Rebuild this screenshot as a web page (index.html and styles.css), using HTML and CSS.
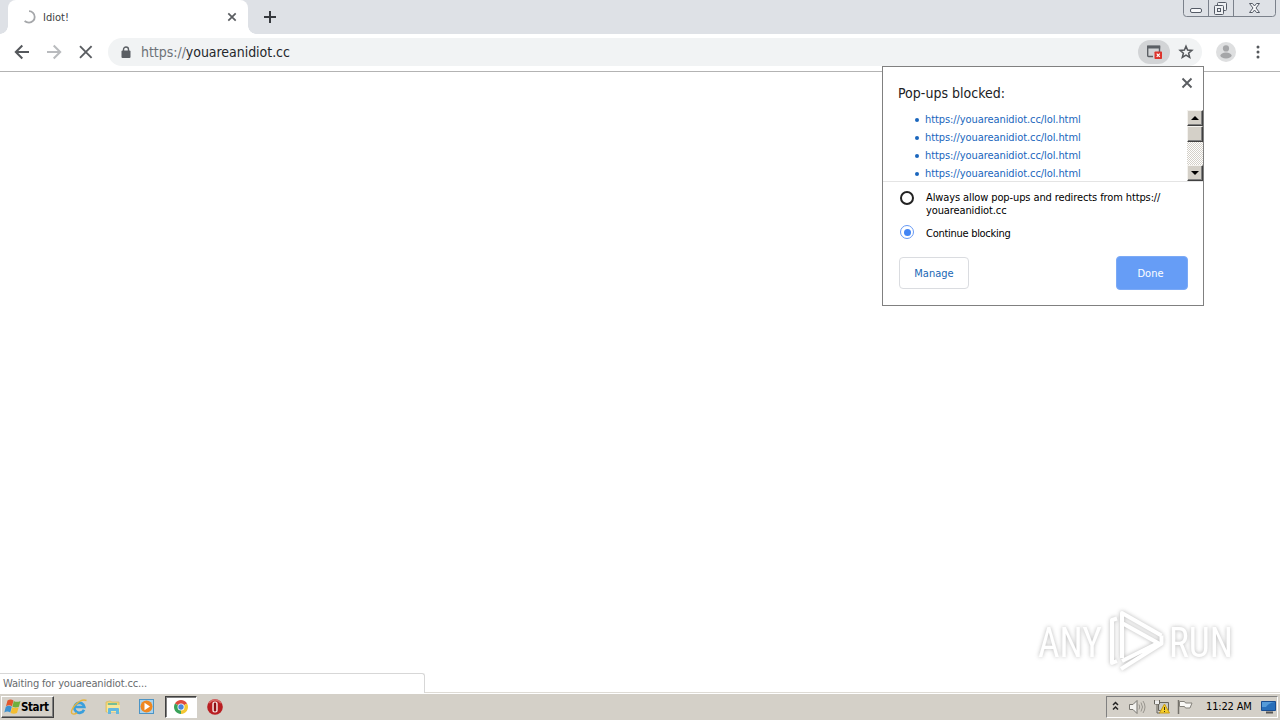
FILE: index.html
```
<!DOCTYPE html>
<html lang="en">
<head>
<meta charset="utf-8">
<title>Idiot!</title>
<link rel="stylesheet" href="styles.css">
</head>
<body>
<div class="screen">
  <header class="tabstrip">
    <div class="tab">
      <svg class="spinner" width="14" height="14" viewBox="0 0 14 14"><path d="M7 1.200A5.700 5.700 0 0 1 7 12.600Q4.500 12.600 2.600 11" fill="none" stroke="#a5a7aa" stroke-width="1.800"/></svg>
      <span class="tab-title">Idiot!</span>
      <svg class="tab-close" width="10" height="10" viewBox="0 0 10 10"><path d="M1.300 1.300l7.400 7.400M8.700 1.300L1.300 8.700" stroke="#5a5d61" stroke-width="1.700"/></svg>
    </div>
    <svg class="new-tab" width="14" height="14" viewBox="0 0 14 14"><path d="M7 1v12M1 7h12" stroke="#36393e" stroke-width="2"/></svg>
    <svg class="winctl" width="94" height="18" viewBox="0 0 94 18" fill="none" stroke="#7b818b">
      <path d="M.5 0v13.500q0 3 3 3h86q3 0 3-3V0M25.500 0v16M50.500 0v16"/>
      <rect x="7.500" y="8.500" width="11" height="4" rx="1.500" fill="#f7f8fa" stroke="#555b66"/>
      <g stroke="#555b66" fill="#eef0f3"><rect x="34.500" y="2.500" width="9" height="8" rx="1"/><rect x="31.500" y="5.500" width="9" height="9" rx="1"/><rect x="34.500" y="8.500" width="3" height="3"/></g>
      <path d="M66.500 3.500h3l2 2.500 2-2.500h3l-3.500 4.500 3.500 4.500h-3l-2-2.500-2 2.500h-3l3.500-4.500z" fill="#f7f8fa" stroke="#555b66"/>
    </svg>
  </header>

  <nav class="toolbar">
    <svg class="nav-icons" width="94" height="20" viewBox="0 0 94 20" fill="none" stroke-width="2">
      <path d="M15 10H2M8.300 3.500L1.800 10l6.500 6.500" stroke="#55585c"/>
      <path d="M33 10h13M39.700 3.500l6.500 6.500-6.500 6.500" stroke="#b9bbbe"/>
      <path d="M66 4.200L77.600 15.800M77.600 4.200L66 15.800" stroke="#5b5e62" stroke-width="1.900"/>
    </svg>
    <div class="omnibox">
      <svg class="lock" width="10" height="13" viewBox="0 0 10 13"><path d="M2.500 5V3.500a2.500 2.500 0 0 1 5 0V5" fill="none" stroke="#5b5f64" stroke-width="1.400"/><rect x=".5" y="4.500" width="9" height="7.500" rx="1" fill="#5b5f64"/></svg>
      <span class="url"><span class="scheme">https://</span>youareanidiot.cc</span>
      <span class="blocked">
        <svg width="18" height="16" viewBox="0 0 18 16"><path d="M2.700 2.500h11.800V8M8 12.500H3.700q-1 0-1-1V2" fill="none" stroke="#5b5f64" stroke-width="1.400"/><path d="M2 1.500h13.200v3H2z" fill="#5b5f64"/><rect x="9.500" y="7.500" width="7.500" height="7.500" rx=".7" fill="#dd342c"/><path d="M11.700 9.700l3.100 3.100M14.800 9.700l-3.100 3.100" stroke="#fff" stroke-width="1.200"/></svg>
      </span>
      <svg class="star" width="16" height="16" viewBox="0 0 16 16"><path d="M8 2.200l1.600 3.900 4.300.3-3.300 2.800 1.100 4.200L8 11.100l-3.700 2.300 1.100-4.200-3.300-2.800 4.300-.3z" fill="none" stroke="#54575b" stroke-width="1.500"/></svg>
    </div>
    <svg class="avatar" width="20" height="20" viewBox="0 0 20 20"><circle cx="10" cy="10" r="10" fill="#dedfe0"/><circle cx="10" cy="6.400" r="3.100" fill="#a5a6a8"/><ellipse cx="10" cy="13.500" rx="5.600" ry="3" fill="#a5a6a8"/></svg>
    <svg class="kebab" width="4" height="14" viewBox="0 0 4 14" fill="#55585c"><circle cx="2" cy="2" r="1.500"/><circle cx="2" cy="7" r="1.500"/><circle cx="2" cy="12" r="1.500"/></svg>
  </nav>

  <main class="page"></main>

  <footer class="taskbar">
    <div class="start">
      <svg width="17" height="16" viewBox="0 0 17 16"><path d="M3.500 1.500q3-2 6 0L8 7.200q-3-1.700-6 0z" fill="#e2562b"/><path d="M9.800 2q3 1.700 6.700 0L14.900 7.700q-3.200 1.600-6.500 0z" fill="#6faf3d"/><path d="M1.800 7.700q3-1.700 6 0L6.300 13.500q-3-1.800-6 0z" fill="#3c91d0"/><path d="M8.200 8.300q3.300 1.600 6.500 0L13 14q-3.200 1.600-6.500 0z" fill="#f3bd31"/></svg>
      <span>Start</span>
    </div>
    <div class="launchers">
      <svg width="18" height="18" viewBox="0 0 18 18"><path d="M14 11.700a5 5 0 1 1 .3-2.700H5" fill="none" stroke="#3a9fdc" stroke-width="2.700"/><path d="M2 15.500C-1 12 10-.5 16.500 2.500M2 15.500q2 1.500 5-.6" fill="none" stroke="#e7b43b" stroke-width="1.400"/></svg>
      <svg width="18" height="18" viewBox="0 0 18 18"><path d="M2 4l4-1 2 1h7v10H2z" fill="#f0d676" stroke="#d9b95b" stroke-width=".7"/><path d="M4 5h9v3H4z" fill="#75bd95"/><path d="M3 7h13v7H3z" fill="#f7e69a"/><path d="M4 16v-5q0-1 1-1h9q1 0 1 1v5h-3v-3H7v3z" fill="#63b8df"/></svg>
      <svg width="18" height="18" viewBox="0 0 18 18"><rect x="1.500" y="1.500" width="14" height="14" fill="#a9d3ed" stroke="#4c94c5"/><circle cx="8.500" cy="8.500" r="6" fill="#ef8720"/><path d="M6.500 4.700l5.500 3.800-5.500 3.800z" fill="#fff"/></svg>
      <div class="active-app"><svg width="14" height="14" viewBox="0 0 14 14"><path d="M7 7L.94 3.500A7 7 0 0 1 13.060 3.500z" fill="#de4b3d"/><path d="M7 7L.94 3.500A7 7 0 0 0 7 14z" fill="#3aa259"/><path d="M7 7l6.060-3.500A7 7 0 0 1 7 14z" fill="#f4c732"/><circle cx="7" cy="7" r="3.500" fill="#fff"/><circle cx="7" cy="7" r="2.700" fill="#4a86dc"/></svg></div>
      <svg width="18" height="18" viewBox="0 0 18 18"><circle cx="9" cy="9" r="7.800" fill="#b91e22"/><path d="M3 5a7.500 7.500 0 0 1 12 0" fill="none" stroke="#d86967" stroke-width="1.500"/><rect x="6.300" y="3.500" width="5.400" height="11" rx="2.500" fill="#f8e7e5"/><rect x="7.800" y="4.500" width="2.400" height="9" rx="1.200" fill="#8e0e14"/></svg>
    </div>
    <div class="tray">
      <svg width="90" height="20" viewBox="0 0 90 20" fill="none">
        <path d="M6 8l2.500-2.500L11 8M6 12.500L8.500 10l2.500 2.500" stroke="#222" stroke-width="1.500"/>
        <path d="M22.500 7.500H26l4-4v13l-4-4h-3.500z" fill="#f3f2ef" stroke="#77756f"/><path d="M32 7.500q1.500 2.500 0 5M34 5.500q3 4.500 0 9M36 4q4 6 0 12" stroke="#98958e"/>
        <path d="M51.500 5.500h10v8h-10z" fill="#c8c9c5" stroke="#66645d"/><path d="M47.500 3v4h5V3M50 7v9h3" stroke="#66645d"/><path d="M48 4h4v3h-4z" fill="#eee"/><path d="M57.500 7l5 9h-10z" fill="#f6cf29" stroke="#c89b17"/><path d="M57.500 10v3M57.500 14v1" stroke="#3a3018"/>
        <path d="M71.500 3v14" stroke="#74716b" stroke-width="1.500"/><path d="M72.500 4.500h5l1 1.500h6.500l-2 5h-4.500l-1-1.500h-5z" fill="#faf9f6" stroke="#85827b"/>
      </svg>
      <span class="clock">11:22 AM</span>
      <svg class="desktop" width="17" height="16" viewBox="0 0 17 16"><path d="M1.500 2.500h14v9h-14z" fill="#286fba" stroke="#194d91"/><path d="M2 3h13q-7 1-9 5H2z" fill="#559bd9"/><path d="M6 13.500h7" stroke="#555" stroke-width="2"/></svg>
    </div>
  </footer>

  <section class="popup">
    <div class="popup-head">
      <h1>Pop-ups blocked:</h1>
      <svg class="popup-close" width="12" height="12" viewBox="0 0 12 12"><path d="M1.500 1.500l9 9M10.500 1.500l-9 9" stroke="#5a5d61" stroke-width="1.900"/></svg>
    </div>
    <div class="list-area">
      <ul>
        <li>https://youareanidiot.cc/lol.html</li>
        <li>https://youareanidiot.cc/lol.html</li>
        <li>https://youareanidiot.cc/lol.html</li>
        <li>https://youareanidiot.cc/lol.html</li>
      </ul>
      <div class="scrollbar">
        <div class="sb-btn"><svg width="8" height="4" viewBox="0 0 8 4"><path d="M0 4l4-4 4 4z"/></svg></div>
        <div class="sb-btn"></div>
        <div class="sb-track"></div>
        <div class="sb-btn"><svg width="8" height="4" viewBox="0 0 8 4"><path d="M0 0l4 4 4-4z"/></svg></div>
      </div>
    </div>
    <div class="options">
      <div class="option"><span class="radio"></span><span class="option-text">Always allow pop-ups and redirects from https://<br>youareanidiot.cc</span></div>
      <div class="option"><span class="radio checked"></span><span class="option-text short">Continue blocking</span></div>
    </div>
    <div class="actions">
      <button class="btn manage">Manage</button>
      <button class="btn done">Done</button>
    </div>
  </section>

  <div class="status">Waiting for youareanidiot.cc...</div>

  <svg class="watermark" width="210" height="76" viewBox="0 0 210 76">
    <g class="wm-text"><text x="8" y="54" textLength="64" lengthAdjust="spacingAndGlyphs">ANY</text><text x="139" y="54" textLength="64" lengthAdjust="spacingAndGlyphs">RUN</text></g>
    <g fill="none" stroke="#fff" stroke-width="4" stroke-linejoin="round">
      <path d="M87 15.500l-5 1.500v43l5-2M92 55V10l39.500 22.500M92 20l36 20-36 18M131.500 32.500v8L91 66"/>
    </g>
  </svg>
</div>
</body>
</html>
```
FILE: styles.css
```
* { box-sizing: border-box; }
body { margin: 0; background: #fff; font-family: "DejaVu Sans Condensed", "DejaVu Sans", sans-serif; font-stretch: condensed; font-size: 11px; color: #111; }
svg { display: block; flex: none; }
.screen { position: relative; display: flex; flex-direction: column; width: 1280px; height: 720px; overflow: hidden; }

.tabstrip { display: flex; height: 34px; padding-left: 8px; background: #dee1e6; }
.tab { position: relative; display: flex; align-items: center; width: 240px; padding: 0 11px 0 14px; background: #fff; border-radius: 8px 8px 0 0; }
.tab::before, .tab::after { content: ""; position: absolute; bottom: 0; width: 8px; height: 8px; }
.tab::before { left: -8px; background: radial-gradient(circle at 0 0, #dee1e6 7.5px, #fff 8px); }
.tab::after { right: -8px; background: radial-gradient(circle at 100% 0, #dee1e6 7.5px, #fff 8px); }
.tab-title { margin-left: 7px; color: #3c4043; }
.tab-close { margin-left: auto; }
.new-tab { margin: 10px 0 0 15px; }
.winctl { margin: 0 3px 0 auto; }

.toolbar { display: flex; align-items: center; height: 38px; padding: 0 20px 2px 14px; border-bottom: 1px solid #b3b3b3; }
.omnibox { display: flex; align-items: center; width: 1094px; height: 28px; padding: 0 8px 0 13px; border-radius: 14px; background: #f1f3f4; }
.lock { margin-top: 1px; }
.url { margin-left: 10px; font-size: 14px; letter-spacing: -0.04px; color: #24272b; }
.scheme { color: #6d7277; }
.blocked { display: flex; align-items: center; justify-content: center; width: 32px; height: 24px; margin-left: auto; border-radius: 12px; background: #d2d4d6; }
.star { margin-left: 8px; }
.avatar { margin-left: 14px; }
.kebab { margin-left: auto; }
.page { flex: 1; background: #fff; }

.taskbar { display: flex; align-items: center; height: 28px; padding: 0 2px 0 1px; background: #d4d0c8; border-top: 1px solid #dedbd5; box-shadow: inset 0 1px #fff; }
.start { display: flex; align-items: center; width: 53px; height: 22px; padding-left: 2px; border: 1px solid; border-color: #fff #404040 #404040 #fff; box-shadow: inset -1px -1px #808080; font-size: 11.5px; font-weight: bold; letter-spacing: -0.4px; color: #000; }
.launchers { display: flex; align-items: center; margin-left: 16px; gap: 16px; }
.active-app { display: flex; align-items: center; justify-content: center; width: 32px; height: 22px; margin: 0 -7px; border: 1px solid; border-color: #404040 #fff #fff #404040; background: #fff; box-shadow: inset 1px 1px #808080; }
.tray { display: flex; align-items: center; width: 172px; height: 22px; margin-left: auto; border: 1px solid; border-color: #808080 #fff #fff #808080; }
.clock { margin-left: 9px; white-space: nowrap; letter-spacing: -0.15px; color: #000; }
.desktop { margin-left: auto; }

.popup { position: absolute; left: 882px; top: 66px; width: 322px; height: 240px; border: 1px solid #808080; background: #fff; }
.popup-head { display: flex; justify-content: space-between; height: 43px; padding: 10px 10px 0 15px; }
.popup-head h1 { margin: 7px 0 0; font-size: 14px; font-weight: normal; line-height: 18px; letter-spacing: 0.02px; color: #202124; }
.list-area { display: flex; justify-content: space-between; height: 72px; border-bottom: 1px solid #e4e4e4; }
.list-area ul { margin: 0; padding: 0 0 0 32px; list-style: none; }
.list-area li { display: flex; align-items: center; height: 18px; letter-spacing: -0.08px; color: #1a66bd; }
.list-area li::before { content: ""; width: 4px; height: 4px; margin: 1px 6px 0 0; border-radius: 50%; background: #1a66bd; }
.scrollbar { display: flex; flex-direction: column; width: 16px; }
.sb-btn { display: flex; align-items: center; justify-content: center; height: 16px; flex: none; background: #d4d0c8; border: 1px solid; border-color: #f4f2ee #404040 #404040 #f4f2ee; box-shadow: inset -1px -1px #808080; }
.sb-track { flex: 1; background: repeating-conic-gradient(#d4d0c8 0 25%, #fff 0 50%) 0 0 / 2px 2px; }
.options { display: flex; flex-direction: column; gap: 8px; padding: 9px 0 0 17px; }
.option { display: flex; align-items: flex-start; }
.radio { display: flex; align-items: center; justify-content: center; width: 14px; height: 14px; border: 2px solid #222; border-radius: 50%; }
.radio.checked { border-color: #6699f5; background: #fff; }
.radio.checked::after { content: ""; flex: none; width: 7px; height: 7px; border-radius: 50%; background: #4285f4; }
.radio.checked { border-width: 1.5px; }
.option-text { margin-left: 12px; line-height: 13px; letter-spacing: -0.11px; white-space: nowrap; color: #000; }
.option-text.short { padding-top: 2px; letter-spacing: -0.28px; }
.actions { display: flex; align-items: center; justify-content: space-between; margin-top: 16px; padding: 0 15px 0 16px; }
.btn { padding: 0; border-radius: 4px; font: inherit; }
.manage { width: 70px; height: 32px; background: #fff; border: 1px solid #dadce0; color: #1967b5; }
.done { width: 72px; height: 34px; background: #669df6; border: 1px solid #7caaf6; color: #fff; padding-right: 3px; }

.status { position: absolute; left: -1px; top: 673px; width: 426px; height: 20px; padding: 3px; border: 1px solid #d7d7d7; border-bottom: 0; border-radius: 0 3px 0 0; background: #fff; line-height: 14px; letter-spacing: -0.15px; color: #686b6e; }
.watermark { position: absolute; left: 1030px; top: 603px; overflow: visible; filter: drop-shadow(0 0 2px #999); opacity: 0.7; }
.wm-text text { font-family: Roboto, sans-serif; font-size: 43px; fill: #fff; }
```
